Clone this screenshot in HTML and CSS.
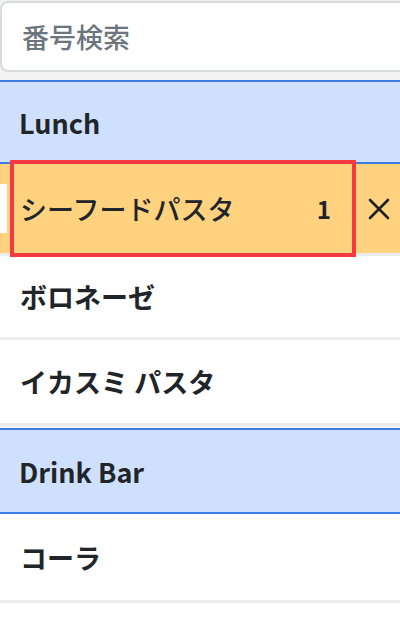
FILE: index.html
```html
<!DOCTYPE html>
<html lang="ja">
<head>
<meta charset="utf-8">
<title>Menu</title>
<link rel="stylesheet" href="styles.css">
</head>
<body>
<div class="search-wrap">
  <input class="search" type="text" placeholder="番号検索">
</div>
<div class="list">
  <div class="group">Lunch</div>
  <div class="row selected">
    <div class="stub"></div>
    <div class="content">
      <span class="name">シーフードパスタ</span>
      <span class="qty">1</span>
    </div>
    <div class="del">
      <svg width="22" height="22" viewBox="0 0 22 22"><path d="M2 2 L20 20 M20 2 L2 20" stroke="#1d1f21" stroke-width="2.6" stroke-linecap="round" fill="none"/></svg>
    </div>
  </div>
  <div class="row r-bolo"><span class="name">ボロネーゼ</span></div>
  <div class="row r-ika"><span class="name">イカスミ パスタ</span></div>
  <div class="group g2">Drink Bar</div>
  <div class="row r-cola"><span class="name">コーラ</span></div>
</div>
</body>
</html>
```
FILE: styles.css
```css
* { box-sizing: border-box; }
html, body { margin: 0; padding: 0; }
body {
  width: 400px;
  overflow: hidden;
  background: #fff;
  font-family: "Noto Sans CJK JP", "Noto Sans", sans-serif;
  color: #212529;
}
.search-wrap {
  background: #f3f3f3;
  padding: 1px 0 8px 0;
  overflow: hidden;
}
.search {
  display: block;
  width: 430px;
  height: 71px;
  border: 2px solid #d9dcdf;
  border-radius: 8px;
  background: #fff;
  padding: 0 0 0 20px;
  font-family: "Noto Sans CJK JP", sans-serif;
  font-size: 27px;
  font-weight: 500;
  outline: none;
}
.search::placeholder { color: #6c757d; }
.list { display: flex; flex-direction: column; background: #f3f3f3; }
.group {
  height: 84px;
  background: #cfe0fd;
  border-top: 2px solid #3d7be6;
  border-bottom: 2px solid #3d7be6;
  display: flex;
  align-items: center;
  padding-left: 19px;
  font-size: 27px;
  font-weight: 700;
}
.g2 { margin-top: 2px; height: 86px; }
.row {
  display: flex;
  align-items: center;
  background: #fff;
  border-bottom: 3px solid #ececec;
  padding-left: 20px;
  font-size: 27px;
  font-weight: 700;
}
.r-bolo { height: 84px; }
.r-ika { height: 86px; }
.r-cola { height: 89px; }
.row.selected {
  height: 92px;
  background: #ffd27f;
  padding-left: 0;
  font-weight: 500;
}
.stub {
  width: 7px;
  height: 49px;
  background: #fff;
  flex: none;
}
.content {
  margin-left: 7px;
  width: 338px;
  height: 89px;
  align-self: flex-start;
  outline: 4px solid #f43a3e;
  display: flex;
  align-items: center;
  justify-content: space-between;
  padding: 0 21px 0 6px;
  position: relative;
}
.qty { font-size: 24px; font-weight: 700; }
.del {
  flex: 1;
  display: flex;
  justify-content: center;
  align-items: center;
  padding-left: 6px;
}
.del svg { display: block; }
```
